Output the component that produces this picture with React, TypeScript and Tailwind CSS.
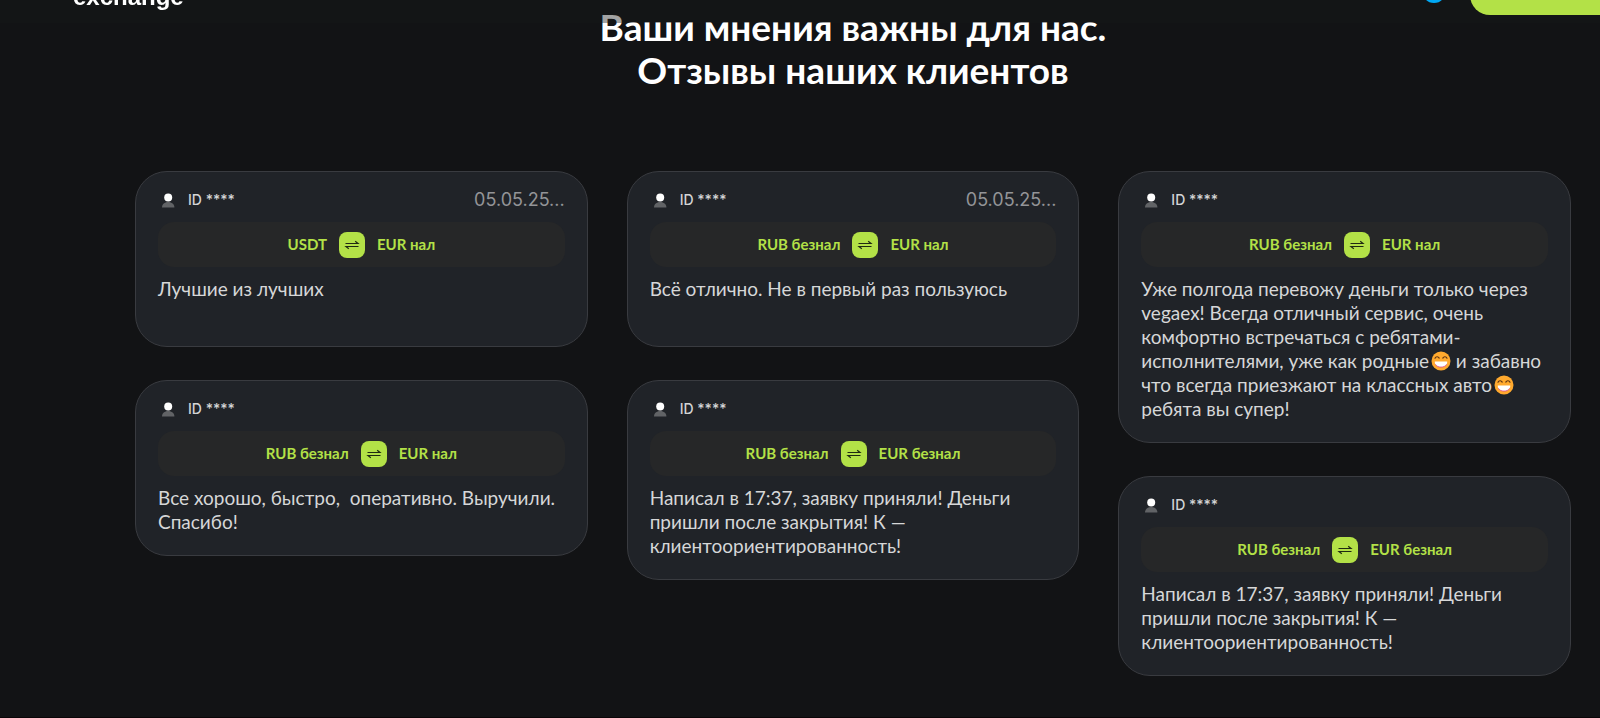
import React from "react";
import { FaTelegramPlane } from "react-icons/fa";

interface Review {
  id: number;
  user: string;
  date?: string;
  from: string;
  to: string;
  text: string;
}

// Reviews are already split by column for the masonry layout
const columns: Review[][] = [
  [
    {
      id: 1,
      user: "ID ****",
      date: "05.05.25...",
      from: "USDT",
      to: "EUR нал",
      text: "Лучшие из лучших",
    },
    {
      id: 2,
      user: "ID ****",
      from: "RUB безнал",
      to: "EUR нал",
      text: "Все хорошо, быстро,  оперативно. Выручили. Спасибо!",
    },
  ],
  [
    {
      id: 3,
      user: "ID ****",
      date: "05.05.25...",
      from: "RUB безнал",
      to: "EUR нал",
      text: "Всё отлично. Не в первый раз пользуюсь",
    },
    {
      id: 4,
      user: "ID ****",
      from: "RUB безнал",
      to: "EUR безнал",
      text: "Написал в 17:37, заявку приняли! Деньги пришли после закрытия! К — клиентоориентированность!",
    },
  ],
  [
    {
      id: 5,
      user: "ID ****",
      from: "RUB безнал",
      to: "EUR нал",
      text: "Уже полгода перевожу деньги только через vegaex! Всегда отличный сервис, очень комфортно встречаться с ребятами-исполнителями, уже как родные:grin: и забавно что всегда приезжают на классных авто:grin: ребята вы супер!",
    },
    {
      id: 6,
      user: "ID ****",
      from: "RUB безнал",
      to: "EUR безнал",
      text: "Написал в 17:37, заявку приняли! Деньги пришли после закрытия! К — клиентоориентированность!",
    },
  ],
];

const UserIcon: React.FC = () => (
  <svg viewBox="0 0 20 20" className="size-5 shrink-0" aria-hidden="true">
    <path d="M4 17.5c0-3.2 2.6-5.5 6.2-5.5s6.2 2.3 6.2 5.5z" fill="#616366" />
    <circle cx="10.2" cy="7.4" r="4" fill="#fff" />
  </svg>
);

const SwapIcon: React.FC = () => (
  <svg
    viewBox="0 0 16 16"
    className="size-4"
    fill="none"
    stroke="#1f2a12"
    strokeWidth="1.2"
    aria-hidden="true"
  >
    <path d="M1.5 6.5h12.500L11.200 4.200" />
    <path d="M14.500 9.500H2L4.800 11.800" />
  </svg>
);

const GrinIcon: React.FC = () => (
  <svg
    viewBox="0 0 20 20"
    className="inline-block size-5 ml-0.5 -mt-1"
    role="img"
    aria-label="grin"
  >
    <circle cx="10" cy="10" r="9.5" fill="#ffa92e" />
    <path
      d="M4 7.2c.9-1.9 3.2-1.9 4.200-.1M11.800 7.100c1-1.800 3.300-1.800 4.200.1"
      fill="none"
      stroke="#5c3213"
      strokeWidth="1.2"
      strokeLinecap="round"
    />
    <path d="M3.8 10.4h12.4c.3 3.4-2.4 5.6-6.2 5.6s-6.5-2.2-6.2-5.6z" fill="#fff" />
    <path
      d="M4.4 13.3c1 1.9 3.1 2.8 5.6 2.8s4.6-.9 5.6-2.8"
      fill="none"
      stroke="#d8458f"
      strokeWidth=".8"
    />
  </svg>
);

const ReviewCard: React.FC<{ review: Review }> = ({ review }) => {
  const parts = review.text.split(":grin:");

  return (
    <article className="rounded-[32px] border border-[#393b40] bg-[#202328] px-[22px] pt-4 pb-[21px]">
      <div className="flex h-6 items-center gap-[10px] font-['Inter',sans-serif]">
        <UserIcon />
        <span className="text-sm font-medium text-[#d3d4d5]">
          {review.user}
        </span>
        {review.date && (
          <span className="ml-auto text-lg text-[#939497]">{review.date}</span>
        )}
      </div>

      <div className="mt-[10px] flex h-[45px] items-center justify-center gap-3 rounded-2xl bg-[#262728] text-[15px] font-bold text-[#b3e147]">
        <span>{review.from}</span>
        <span className="flex size-[26px] items-center justify-center rounded-lg bg-[#b3e147]">
          <SwapIcon />
        </span>
        <span>{review.to}</span>
      </div>

      <p className="mt-[10px] min-h-12 text-[19px] leading-6 whitespace-pre-wrap text-[#d6d7d8]">
        {parts.map((part, i) => (
          <React.Fragment key={i}>
            {i > 0 && <GrinIcon />}
            {part}
          </React.Fragment>
        ))}
      </p>
    </article>
  );
};

const Header: React.FC = () => (
  <header className="fixed inset-x-0 -top-14 z-10 flex h-[79px] items-end bg-[#17181a]/40 pb-2 pl-[73px] font-['Liberation_Sans',sans-serif]">
    <a href="#" className="mb-1.5 text-2xl leading-6 font-bold text-white">
      exchange
    </a>
    <a
      href="#"
      aria-label="Telegram"
      className="mr-6 mb-3 ml-auto flex size-6 items-center justify-center rounded-full bg-[#00a8f4] text-white"
    >
      <FaTelegramPlane className="size-3" />
    </a>
    <button
      type="button"
      aria-label="Обмен"
      className="h-12 w-[130px] rounded-l-[20px] bg-[#b3e147]"
    />
  </header>
);

export default function App() {
  return (
    <div className="min-h-screen border-b border-[#0a0507] bg-[#121315] font-['Lato','Noto_Sans',sans-serif]">
      <Header />
      <main className="pt-[5px] pr-[29px] pb-10 pl-[135px]">
        <h2 className="text-center text-[37px] leading-[43px] font-bold text-white">
          Ваши мнения важны для нас.
          <br />
          Отзывы наших клиентов
        </h2>
        <div className="mt-20 grid grid-cols-3 items-start gap-[39px]">
          {columns.map((reviews, i) => (
            <div key={i} className="flex flex-col gap-[33px]">
              {reviews.map((review) => (
                <ReviewCard key={review.id} review={review} />
              ))}
            </div>
          ))}
        </div>
      </main>
    </div>
  );
}
